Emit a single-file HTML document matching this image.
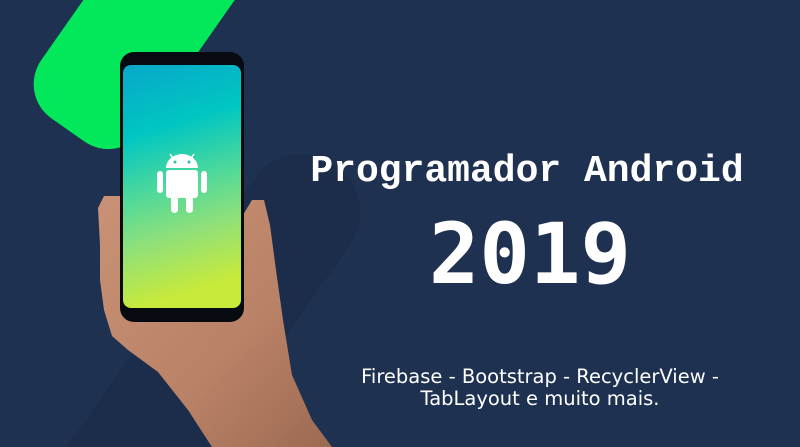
<!DOCTYPE html>
<html><head><meta charset="utf-8"><style>
html,body{margin:0;padding:0;overflow:hidden;width:800px;height:447px}
body{background:#1e3150;position:relative;font-family:"Liberation Sans",sans-serif}
svg{position:absolute;left:0;top:0}
.t{position:absolute;color:#fff;text-align:center;white-space:nowrap}
</style></head><body>
<svg width="800" height="447" viewBox="0 0 800 447">
<defs>
<linearGradient id="scr" x1="0" y1="0" x2="0.15" y2="1">
<stop offset="0" stop-color="#08a8c9"/>
<stop offset="0.3" stop-color="#00c6c2"/>
<stop offset="0.55" stop-color="#4fd99a"/>
<stop offset="0.75" stop-color="#8fe07a"/>
<stop offset="1" stop-color="#c8ea3a"/>
</linearGradient>
<linearGradient id="skin" x1="0" y1="0" x2="1" y2="1">
<stop offset="0" stop-color="#c99276"/>
<stop offset="0.6" stop-color="#b98166"/>
<stop offset="1" stop-color="#9c6a52"/>
</linearGradient>
</defs>
<g transform="translate(300,215) rotate(35)">
<rect x="-58" y="-60" width="116" height="520" rx="55" fill="#1b2d4a"/>
</g>
<g transform="translate(68,130) rotate(35)">
<rect x="-62" y="-400" width="124" height="400" rx="42" fill="#02e85a"/>
</g>
<path d="M243,215 L252,200 L264,200 L270,225 L276,270 L283,320 L292,375 L312,420 L332,447 L212,447 L188,410 L158,372 L128,350 L112,336 L104,310 L100,280 L100,245 L98,208 L104,196 L122,196 Z" fill="url(#skin)"/>
<rect x="120" y="52" width="124" height="270" rx="14" fill="#070a10"/>
<rect x="123" y="65" width="118" height="243" rx="8" fill="url(#scr)"/>
<g fill="#fff">
<path d="M166,168 a16,14 0 0 1 32,0 Z"/>
<line x1="170" y1="154" x2="174" y2="160" stroke="#fff" stroke-width="1.5"/>
<line x1="194" y1="154" x2="190" y2="160" stroke="#fff" stroke-width="1.5"/>
<rect x="166" y="170" width="32" height="28" rx="3"/>
<rect x="157" y="171" width="6" height="22" rx="3"/>
<rect x="201" y="171" width="6" height="22" rx="3"/>
<rect x="171" y="194" width="7" height="19" rx="3.5"/>
<rect x="186" y="194" width="7" height="19" rx="3.5"/>
</g>
<circle cx="175" cy="162" r="1.5" fill="#2cc0b0"/>
<circle cx="189" cy="162" r="1.5" fill="#2cc0b0"/>
</svg>
<div class="t" style="left:300px;width:454px;top:150px;font:bold 38px 'Liberation Mono',monospace">Programador Android</div>
<div class="t" style="left:380px;width:300px;top:204px;font:bold 84px 'DejaVu Sans Mono',monospace;line-height:100px">2019</div>
<div class="t" style="left:320px;width:440px;top:366px;font:19.5px 'DejaVu Sans',sans-serif;line-height:22px">Firebase - Bootstrap - RecyclerView -<br>TabLayout e muito mais.</div>
</body></html>
